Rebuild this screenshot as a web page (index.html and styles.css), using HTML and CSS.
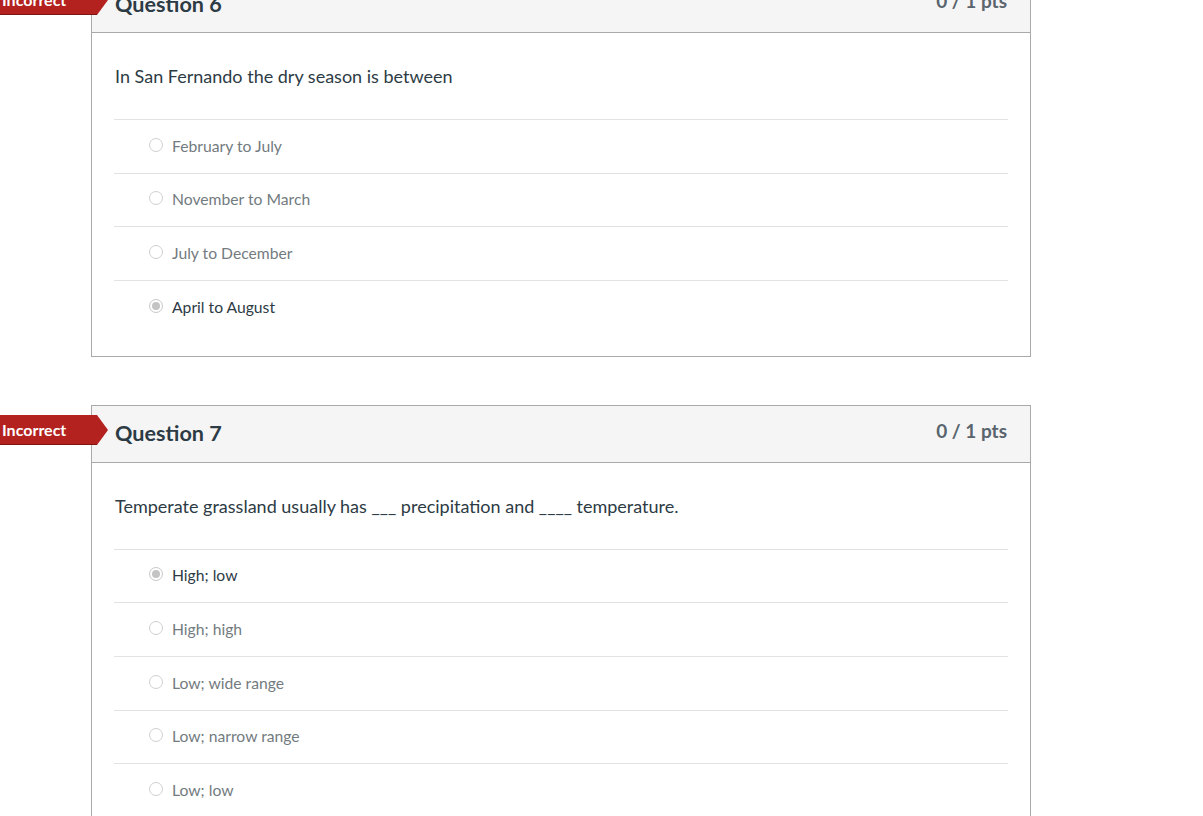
FILE: index.html
```html
<!DOCTYPE html>
<html>
<head>
<meta charset="utf-8">
<link rel="stylesheet" href="styles.css">
</head>
<body>
<div class="quiz">
  <div class="question">
    <div class="badge">Incorrect</div>
    <div class="q-header">
      <span class="q-title">Question 6</span>
      <span class="q-pts">0 / 1 pts</span>
    </div>
    <div class="q-body">
      <div class="q-text">In San Fernando the dry season is between</div>
      <div class="answers">
        <div class="answer"><span class="radio"></span><span class="a-text">February to July</span></div>
        <div class="answer"><span class="radio"></span><span class="a-text">November to March</span></div>
        <div class="answer"><span class="radio"></span><span class="a-text">July to December</span></div>
        <div class="answer selected"><span class="radio"></span><span class="a-text">April to August</span></div>
      </div>
    </div>
  </div>
  <div class="question">
    <div class="badge">Incorrect</div>
    <div class="q-header">
      <span class="q-title">Question 7</span>
      <span class="q-pts">0 / 1 pts</span>
    </div>
    <div class="q-body">
      <div class="q-text">Temperate grassland usually has ___ precipitation and ____ temperature.</div>
      <div class="answers">
        <div class="answer selected"><span class="radio"></span><span class="a-text">High; low</span></div>
        <div class="answer"><span class="radio"></span><span class="a-text">High; high</span></div>
        <div class="answer"><span class="radio"></span><span class="a-text">Low; wide range</span></div>
        <div class="answer"><span class="radio"></span><span class="a-text">Low; narrow range</span></div>
        <div class="answer"><span class="radio"></span><span class="a-text">Low; low</span></div>
      </div>
    </div>
  </div>
</div>
</body>
</html>
```
FILE: styles.css
```css
html, body {
  margin: 0;
  padding: 0;
  background: #ffffff;
  font-family: Lato, "Open Sans", sans-serif;
  color: #2d3b45;
}
body {
  height: 816px;
  overflow: hidden;
}
.quiz {
  margin: -25px 0 0 91px;
  width: 940px;
  display: flex;
  flex-direction: column;
  gap: 48px;
}
.question {
  position: relative;
  border: 1px solid #a9a9a9;
  background: #fff;
}
.badge {
  position: absolute;
  left: -92px;
  top: 9px;
  width: 97px;
  height: 30px;
  box-sizing: border-box;
  padding-left: 2px;
  background: #b3221f;
  border-bottom: 1px solid #7d1512;
  color: #fff;
  font-weight: 700;
  font-size: 16px;
  line-height: 29px;
  z-index: 2;
}
.badge::after {
  content: "";
  position: absolute;
  left: 97px;
  top: 0;
  width: 0;
  height: 0;
  border-top: 15px solid transparent;
  border-bottom: 15px solid transparent;
  border-left: 11px solid #b3221f;
}
.q-header {
  height: 56px;
  background: #f5f5f5;
  border-bottom: 1px solid #a9a9a9;
  display: flex;
  justify-content: space-between;
  align-items: center;
  padding: 0 23px 0 23px;
}
.q-title {
  font-size: 21.6px;
  font-weight: 700;
  color: #2d3b45;
  margin-top: -1px;
}
.q-pts {
  font-size: 19px;
  font-weight: 700;
  color: #59646d;
  margin-top: -7px;
}
.q-body {
  padding: 30px 22px 22px 22px;
}
.q-text {
  font-size: 18px;
  line-height: 26px;
  padding-left: 1px;
  margin-bottom: 30px;
}
.answer {
  border-top: 1px solid #e2e2e2;
  height: 52.67px;
  display: flex;
  align-items: center;
  padding-left: 35px;
}
.radio {
  width: 14px;
  height: 14px;
  border: 1px solid #d0d0d0;
  border-radius: 50%;
  box-sizing: border-box;
  margin-right: 9px;
  margin-top: -3px;
  flex: none;
  position: relative;
  background: #fff;
}
.selected .radio {
  border-color: #c8c8c8;
}
.selected .radio::after {
  content: "";
  position: absolute;
  left: 2px;
  top: 2px;
  width: 8px;
  height: 8px;
  border-radius: 50%;
  background: #c4c4c4;
}
.a-text {
  font-size: 15.7px;
  color: #737b80;
  margin-top: -1px;
}
.selected .a-text {
  color: #2d3b45;
}
```
